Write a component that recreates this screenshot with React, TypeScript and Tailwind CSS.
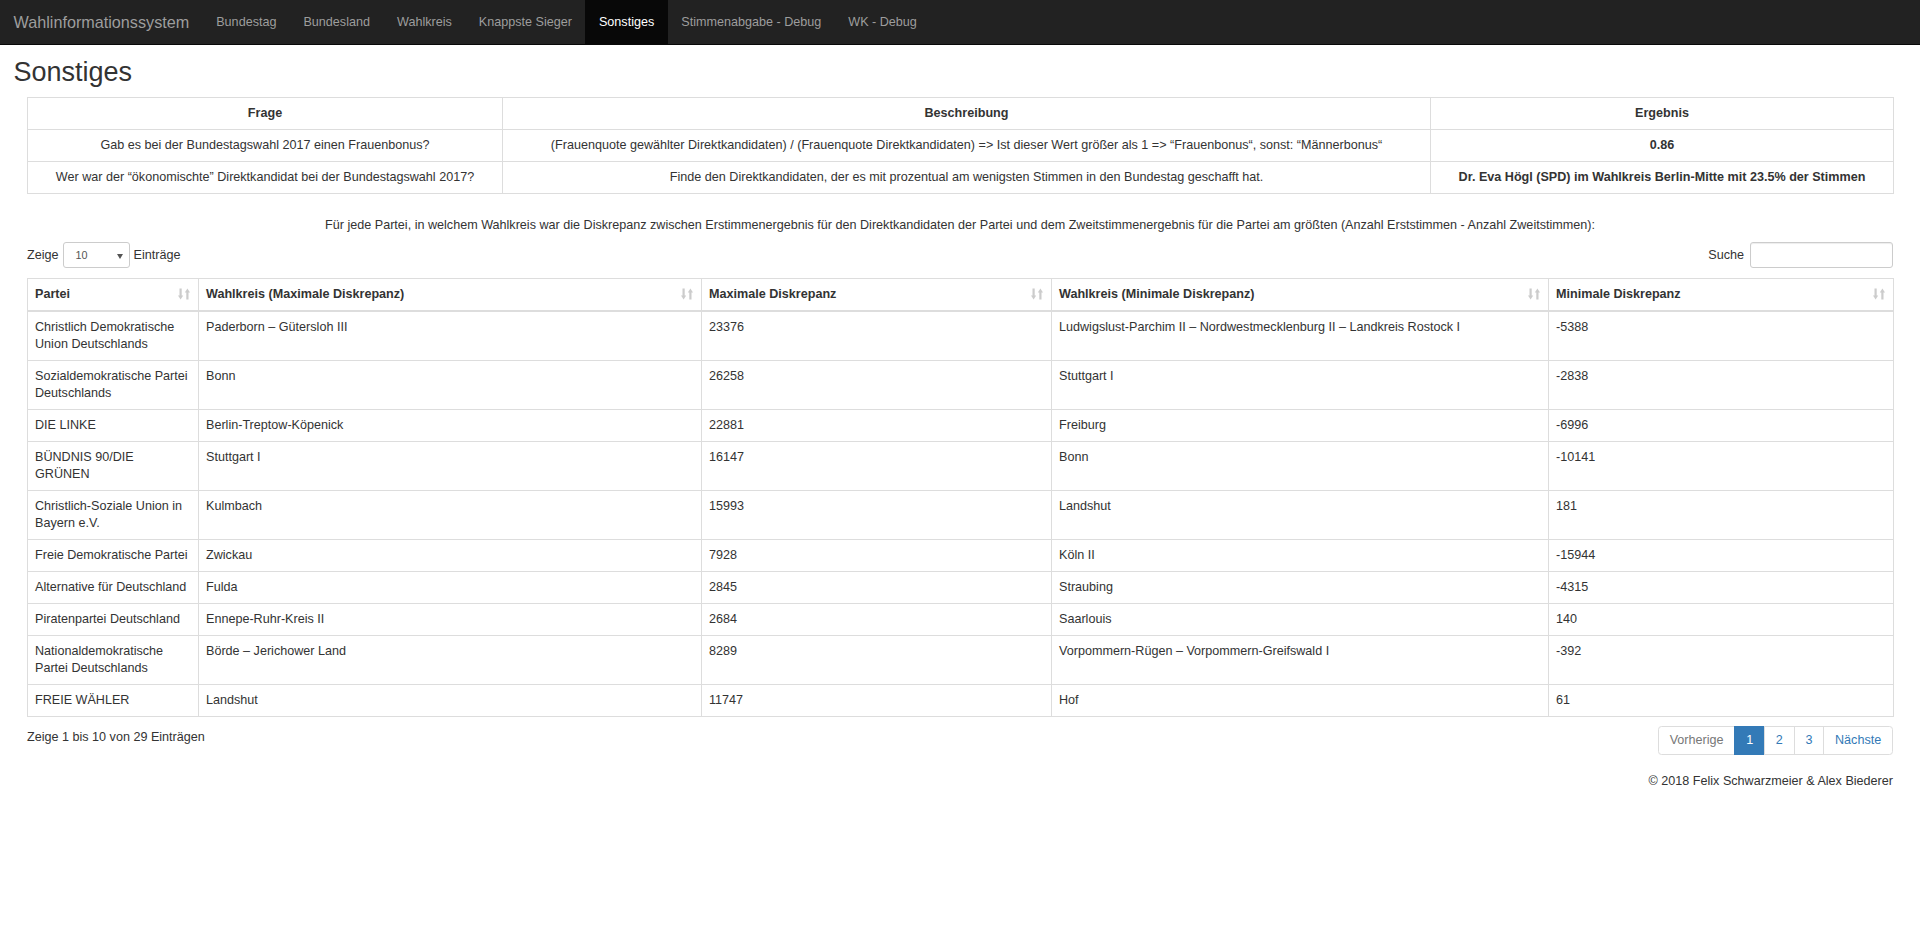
// Wahlinformationssystem – "Sonstiges" page
// Bootstrap 3 look (rendered at 90%) rebuilt with Tailwind classes
import React from 'react';
import clsx from 'clsx';

const navLinks = [
  'Bundestag',
  'Bundesland',
  'Wahlkreis',
  'Knappste Sieger',
  'Sonstiges',
  'Stimmenabgabe - Debug',
  'WK - Debug',
];

const questions = [
  {
    frage: 'Gab es bei der Bundestagswahl 2017 einen Frauenbonus?',
    beschreibung:
      '(Frauenquote gewählter Direktkandidaten) / (Frauenquote Direktkandidaten) => Ist dieser Wert größer als 1 => “Frauenbonus“, sonst: “Männerbonus“',
    ergebnis: '0.86',
  },
  {
    frage: 'Wer war der “ökonomischte” Direktkandidat bei der Bundestagswahl 2017?',
    beschreibung: 'Finde den Direktkandidaten, der es mit prozentual am wenigsten Stimmen in den Bundestag geschafft hat.',
    ergebnis: 'Dr. Eva Högl (SPD) im Wahlkreis Berlin-Mitte mit 23.5% der Stimmen',
  },
];

const columns = [
  { title: 'Partei', width: 'w-[171px]' },
  { title: 'Wahlkreis (Maximale Diskrepanz)', width: 'w-[503px]' },
  { title: 'Maximale Diskrepanz', width: 'w-[350px]' },
  { title: 'Wahlkreis (Minimale Diskrepanz)', width: 'w-[497px]' },
  { title: 'Minimale Diskrepanz', width: 'w-[345px]' },
];

const rows = [
  ['Christlich Demokratische Union Deutschlands', 'Paderborn – Gütersloh III', '23376', 'Ludwigslust-Parchim II – Nordwestmecklenburg II – Landkreis Rostock I', '-5388'],
  ['Sozialdemokratische Partei Deutschlands', 'Bonn', '26258', 'Stuttgart I', '-2838'],
  ['DIE LINKE', 'Berlin-Treptow-Köpenick', '22881', 'Freiburg', '-6996'],
  ['BÜNDNIS 90/DIE GRÜNEN', 'Stuttgart I', '16147', 'Bonn', '-10141'],
  ['Christlich-Soziale Union in Bayern e.V.', 'Kulmbach', '15993', 'Landshut', '181'],
  ['Freie Demokratische Partei', 'Zwickau', '7928', 'Köln II', '-15944'],
  ['Alternative für Deutschland', 'Fulda', '2845', 'Straubing', '-4315'],
  ['Piratenpartei Deutschland', 'Ennepe-Ruhr-Kreis II', '2684', 'Saarlouis', '140'],
  ['Nationaldemokratische Partei Deutschlands', 'Börde – Jerichower Land', '8289', 'Vorpommern-Rügen – Vorpommern-Greifswald I', '-392'],
  ['FREIE WÄHLER', 'Landshut', '11747', 'Hof', '61'],
];

// DataTables "sort both" glyph: down arrow left, up arrow right
const SortIcon: React.FC = () => (
  <svg width="12" height="12" viewBox="0 0 12 12" className="absolute top-[9px] right-[8px]" fill="#cccccc">
    <rect x="1.5" y="0.5" width="2.2" height="7.5" />
    <polygon points="0,7.5 5.2,7.5 2.6,11.5" />
    <polygon points="6.8,4.5 12,4.5 9.4,0.5" />
    <rect x="8.3" y="4" width="2.2" height="7.5" />
  </svg>
);

const cell = 'border border-[#ddd] px-[7px] py-[7px] leading-[17px] align-top';

const App: React.FC = () => {
  return (
    <div className="min-h-screen bg-white text-[#333] text-[12.6px] font-['Liberation_Sans',Arial,sans-serif]">
      <nav className="flex h-[45px] bg-[#222] border-b border-[#080808]">
        <a className="flex items-center px-[13.5px] text-[16.2px] text-[#9d9d9d]">Wahlinformationssystem</a>
        <ul className="flex">
          {navLinks.map((l) => (
            <li key={l}>
              <a
                className={clsx(
                  'flex h-full items-center px-[13.5px]',
                  l === 'Sonstiges' ? 'bg-[#080808] text-white' : 'text-[#9d9d9d]'
                )}
              >
                {l}
              </a>
            </li>
          ))}
        </ul>
      </nav>

      <div className="px-[13.5px]">
        <h2 className="mt-[13px] mb-[9px] text-[27px] leading-[29.7px] font-normal">Sonstiges</h2>

        <div className="px-[13.5px]">
          {/* Fragen */}
          <table className="w-full table-fixed border-collapse text-center">
            <colgroup>
              <col className="w-[475px]" />
              <col className="w-[928px]" />
              <col className="w-[463px]" />
            </colgroup>
            <tbody>
              <tr>
                <th className={clsx(cell, 'font-bold')}>Frage</th>
                <th className={clsx(cell, 'font-bold')}>Beschreibung</th>
                <th className={clsx(cell, 'font-bold')}>Ergebnis</th>
              </tr>
              {questions.map((q) => (
                <tr key={q.frage}>
                  <td className={cell}>{q.frage}</td>
                  <td className={cell}>{q.beschreibung}</td>
                  <td className={clsx(cell, 'font-bold')}>{q.ergebnis}</td>
                </tr>
              ))}
            </tbody>
          </table>

          <p className="mt-[22px] text-center leading-[18px]">
            Für jede Partei, in welchem Wahlkreis war die Diskrepanz zwischen Erstimmenergebnis für den Direktkandidaten der Partei und dem Zweitstimmenergebnis für die Partei am größten (Anzahl Erststimmen - Anzahl Zweitstimmen):
          </p>

          {/* DataTable controls */}
          <div className="mt-[8px] flex items-center justify-between">
            <label className="flex items-center gap-[4px]">
              <span>Zeige</span>
              <div className="relative flex h-[26.5px] w-[67px] items-center rounded-[3px] border border-[#ccc] pl-[12px] text-[10.8px] text-[#555]">
                10
                <svg width="6" height="5" viewBox="0 0 6 5" className="absolute right-[6px] top-[11px]" fill="#555">
                  <polygon points="0,0 6,0 3,5" />
                </svg>
              </div>
              <span>Einträge</span>
            </label>
            <label className="flex items-center gap-[6px]">
              <span>Suche</span>
              <div className="h-[26.5px] w-[143px] rounded-[3px] border border-[#ccc] shadow-[inset_0_1px_1px_rgba(0,0,0,0.075)]" />
            </label>
          </div>

          {/* Diskrepanz-Tabelle */}
          <table className="mt-[9.6px] w-full table-fixed border-collapse text-left">
            <colgroup>
              {columns.map((c) => (
                <col key={c.title} className={c.width} />
              ))}
            </colgroup>
            <thead>
              <tr>
                {columns.map((c) => (
                  <th key={c.title} className={clsx(cell, 'relative border-b-2 font-bold')}>
                    {c.title}
                    <SortIcon />
                  </th>
                ))}
              </tr>
            </thead>
            <tbody>
              {rows.map((r) => (
                <tr key={r[0]}>
                  {r.map((v, i) => (
                    <td key={i} className={cell}>
                      {v}
                    </td>
                  ))}
                </tr>
              ))}
            </tbody>
          </table>

          <div className="mt-[9px] flex items-start justify-between">
            <div className="pt-[3.5px] leading-[17px]">Zeige 1 bis 10 von 29 Einträgen</div>
            <ul className="flex leading-[17px]">
              <li className="rounded-l-[3.5px] border border-[#ddd] px-[10.8px] py-[5px] text-[#777]">Vorherige</li>
              <li className="-ml-px border border-[#337ab7] bg-[#337ab7] px-[10.8px] py-[5px] text-white">1</li>
              <li className="-ml-px border border-[#ddd] px-[10.8px] py-[5px] text-[#337ab7]">2</li>
              <li className="-ml-px border border-[#ddd] px-[10.8px] py-[5px] text-[#337ab7]">3</li>
              <li className="-ml-px rounded-r-[3.5px] border border-[#ddd] px-[10.8px] py-[5px] text-[#337ab7]">Nächste</li>
            </ul>
          </div>

          <footer className="mt-[18.5px] text-right leading-[17px]">© 2018 Felix Schwarzmeier &amp; Alex Biederer</footer>
        </div>
      </div>
    </div>
  );
};

export default App;
